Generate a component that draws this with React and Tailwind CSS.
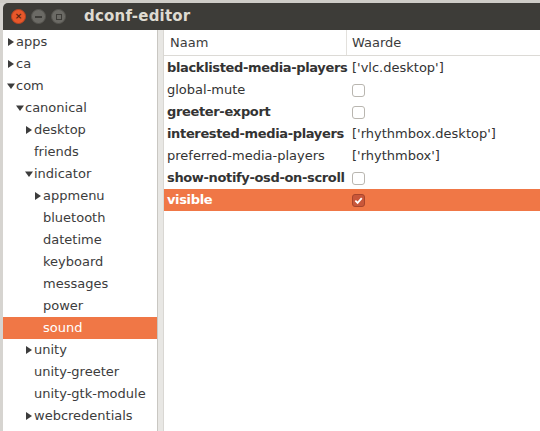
const font = { fontFamily: '"DejaVu Sans", "Noto Sans", sans-serif' };

const tree = [
  { name: 'apps', level: 0, arrow: 'right' },
  { name: 'ca', level: 0, arrow: 'right' },
  { name: 'com', level: 0, arrow: 'down' },
  { name: 'canonical', level: 1, arrow: 'down' },
  { name: 'desktop', level: 2, arrow: 'right' },
  { name: 'friends', level: 2 },
  { name: 'indicator', level: 2, arrow: 'down' },
  { name: 'appmenu', level: 3, arrow: 'right' },
  { name: 'bluetooth', level: 3 },
  { name: 'datetime', level: 3 },
  { name: 'keyboard', level: 3 },
  { name: 'messages', level: 3 },
  { name: 'power', level: 3 },
  { name: 'sound', level: 3, selected: true },
  { name: 'unity', level: 2, arrow: 'right' },
  { name: 'unity-greeter', level: 2 },
  { name: 'unity-gtk-module', level: 2 },
  { name: 'webcredentials', level: 2, arrow: 'right' },
];

const keys = [
  { name: 'blacklisted-media-players', bold: true, value: "['vlc.desktop']" },
  { name: 'global-mute', check: false },
  { name: 'greeter-export', bold: true, check: false },
  { name: 'interested-media-players', bold: true, value: "['rhythmbox.desktop']" },
  { name: 'preferred-media-players', value: "['rhythmbox']" },
  { name: 'show-notify-osd-on-scroll', bold: true, check: false },
  { name: 'visible', bold: true, check: true, selected: true },
];

const indent = ['pl-[3px]', 'pl-[12px]', 'pl-[21px]', 'pl-[30px]'];

function Arrow({ dir }) {
  if (dir === 'down') {
    return (
      <svg width="10" height="10" viewBox="0 0 10 10" className="shrink-0">
        <path d="M1 2.5 L9 2.5 L5 8 Z" fill="#3c3c3c" />
      </svg>
    );
  }
  return (
    <svg width="10" height="10" viewBox="0 0 10 10" className="shrink-0">
      <path d="M2 1 L8 5 L2 9 Z" fill="#3c3c3c" />
    </svg>
  );
}

function Checkbox({ checked }) {
  if (checked) {
    return (
      <div className="w-[13px] h-[13px] rounded-[3px] bg-[#c9573a] border border-[#a8452c] flex items-center justify-center">
        <svg width="9" height="9" viewBox="0 0 10 10">
          <path d="M1.5 5.2 L4 7.6 L8.6 2.3" stroke="#ffffff" strokeWidth="2" fill="none" />
        </svg>
      </div>
    );
  }
  return <div className="w-[13px] h-[13px] rounded-[3px] bg-white border border-[#b9b6b0]" />;
}

export default function App() {
  return (
    <div className="w-[540px] h-[431px] bg-[#d6d4d0] overflow-hidden flex flex-col" style={font}>
      <div className="h-[3px] bg-[#cfcdc8]" />
      <div className="ml-[3px] h-[27px] bg-[#3d3c38] rounded-tl-[5px] flex items-center shrink-0">
        <div className="flex items-center gap-[5px] pl-[8px]">
          <div className="w-[15px] h-[15px] rounded-full bg-[#e7572a] flex items-center justify-center border border-[#b84321]">
            <span className="text-[9px] leading-none text-[#5a2410] font-bold">×</span>
          </div>
          <div className="w-[15px] h-[15px] rounded-full bg-[#6b6a65] flex items-center justify-center border border-[#55544f]">
            <div className="w-[7px] h-[2px] bg-[#3d3c38]" />
          </div>
          <div className="w-[15px] h-[15px] rounded-full bg-[#6b6a65] flex items-center justify-center border border-[#55544f]">
            <div className="w-[6px] h-[6px] border border-[#3d3c38]" />
          </div>
        </div>
        <span className="ml-[18px] text-[15px] font-bold text-[#dfdbd2] tracking-[0.2px]">dconf-editor</span>
      </div>
      <div className="flex flex-1 ml-[3px] bg-white">
        <div className="w-[154px] pt-[1px] text-[13px] text-[#3c3c3c]">
          {tree.map((t) => (
            <div
              key={t.name}
              className={`h-[22px] flex items-center ${indent[t.level]} ${t.selected ? 'bg-[#f07746] text-white' : ''}`}
            >
              <div className="w-[10px] flex items-center">{t.arrow && <Arrow dir={t.arrow} />}</div>
              <span>{t.name}</span>
            </div>
          ))}
        </div>
        <div className="w-[7px] bg-[#e8e7e4] border-l border-[#c9c7c2] border-r border-r-[#d9d7d3]" />
        <div className="flex-1 text-[13px] text-[#333333]">
          <div className="h-[26px] flex items-center border-b border-[#dcdad6] text-[#3c3c3c]">
            <div className="w-[183px] pl-[6px] h-full flex items-center border-r border-[#e3e1dd]">Naam</div>
            <div className="pl-[5px]">Waarde</div>
          </div>
          <div className="pt-[1px]">
            {keys.map((k) => (
              <div
                key={k.name}
                className={`h-[22px] flex items-center ${k.selected ? 'bg-[#f07746] text-white' : ''}`}
              >
                <div className={`w-[183px] pl-[3px] whitespace-nowrap ${k.bold ? 'font-bold tracking-[-0.35px]' : ''}`}>{k.name}</div>
                <div className="pl-[5px]">
                  {k.value !== undefined ? k.value : <Checkbox checked={k.check} />}
                </div>
              </div>
            ))}
          </div>
        </div>
      </div>
    </div>
  );
}
